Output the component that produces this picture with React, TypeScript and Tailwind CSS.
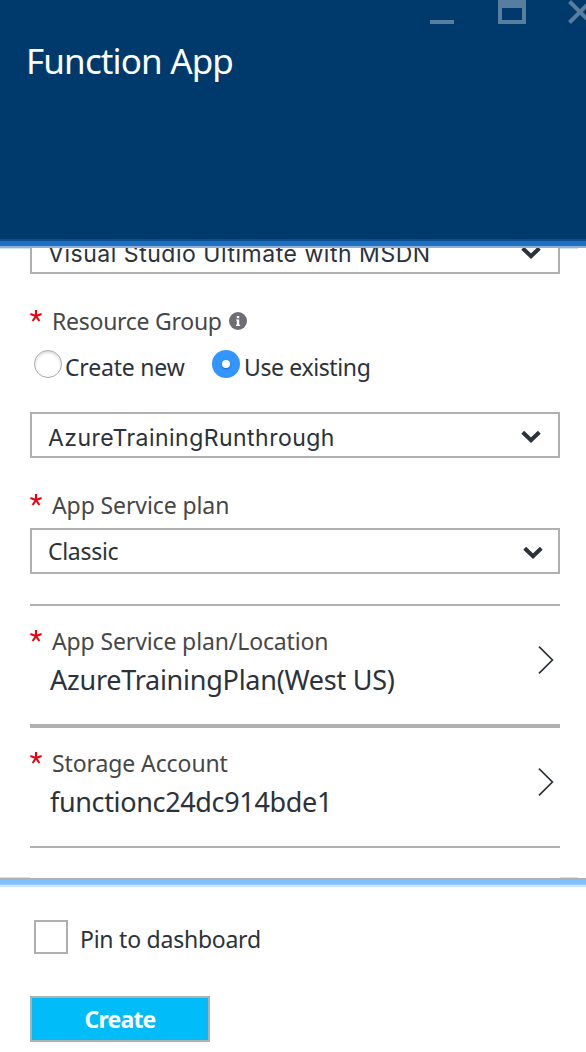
import type { ReactNode } from 'react';

function Required() {
  return (
    <svg className="mt-[5px] h-3 w-3 shrink-0" viewBox="0 0 12 12" fill="none" stroke="#f0000f" strokeWidth="2.1">
      <path d="M6 6V0M6 6L.4 4.1M6 6L11.6 4.1M6 6L2.6 11M6 6L9.4 11" />
    </svg>
  );
}

function Label({ children, className }: { children: ReactNode; className: string }) {
  return (
    <div className="flex h-8">
      <Required />
      <span className={`ml-2.5 text-[23px] leading-8 whitespace-nowrap text-[#474747] ${className}`}>{children}</span>
    </div>
  );
}

function Caret({ className }: { className: string }) {
  return (
    <svg className={`h-3.5 w-5 shrink-0 ${className}`} viewBox="0 0 20 14" fill="none" stroke="#2b323a" strokeWidth="4">
      <path d="M1.7 2.2L10 10.3L18.3 2.2" />
    </svg>
  );
}

function Chevron() {
  return (
    <svg className="mr-1.5 h-7 w-4 shrink-0" viewBox="0 0 16 28" fill="none" stroke="#2b323a" strokeWidth="1.7">
      <path d="M1 .6L14.4 14L1 27.4" />
    </svg>
  );
}

function EdgeGlow() {
  return (
    <div className="flex h-px shrink-0 justify-between pr-2">
      <div className="w-[30px] bg-[#cce2f6]" />
      <div className="w-[18px] bg-[#cce2f6]" />
    </div>
  );
}

export default function App() {
  return (
    <div className="flex h-[1052px] w-[586px] flex-col overflow-hidden bg-white font-['Noto_Sans','Open_Sans',sans-serif] text-[#2b323a]">
      <header className="h-[239px] shrink-0 bg-[#003a6c]">
        <div className="flex h-6 justify-end">
          <svg className="h-6 w-[156px]" viewBox="0 0 156 24" fill="#587e9f">
            <path d="M0 20h24v4H0zM68 0h28v24H68zM72 8v12h20V8z" fillRule="evenodd" />
            <path d="M139.5 1.5L160 22M139.5 22.5L160 2" stroke="#587e9f" strokeWidth="4" fill="none" />
          </svg>
        </div>
        <h1 className="mt-[13px] ml-[26px] text-[35px] leading-[48px] tracking-[-0.85px] whitespace-nowrap text-white">Function App</h1>
      </header>
      <div className="h-0.5 shrink-0 bg-[#0a508f]" />
      <div className="h-[5px] shrink-0 bg-[#1f70c4]" />
      <div className="h-0.5 shrink-0 bg-[#8fb0d3]" />
      <EdgeGlow />

      <main className="-mt-px flex h-[629px] shrink-0 flex-col pr-[26px] pl-[30px]">
        <div className="flex h-[26px] shrink-0 items-end justify-between overflow-hidden border-x-2 border-b-2 border-[#b0b0b0] bg-white pr-[17px] pl-4 font-['Inter',sans-serif]">
          <span className="mb-[2px] text-[23px] leading-8 tracking-[0.53px] whitespace-nowrap">Visual Studio Ultimate with MSDN</span>
          <Caret className="mb-[12px]" />
        </div>

        <div className="mt-[31px] flex items-start">
          <Label className="tracking-[-0.27px]">Resource Group</Label>
          <svg className="mt-[7px] ml-[7px] h-[18px] w-[18px]" viewBox="0 0 18 18">
            <circle cx="9" cy="9" r="9" fill="#6c6e74" />
            <path d="M7.8 4h2.4v2.2H7.8zM7 7.4h3.2v5.4h.9V14H7v-1.2h.8V8.6H7z" fill="#fff" />
          </svg>
        </div>

        <div className="mt-3.5 flex h-8 items-start text-[23px] leading-8">
          <label className="flex w-[178px] pl-1 whitespace-nowrap">
            <span className="mt-[-1px] mr-[3px] h-7 w-7 shrink-0 rounded-full border border-[#a8a8a8] bg-white shadow-[inset_0_2px_3px_#ddd]" />
            <span className="tracking-[-0.2px]">Create new</span>
          </label>
          <label className="flex pl-1 whitespace-nowrap">
            <span className="mt-[-1px] mr-[4px] flex h-7 w-7 shrink-0 items-center justify-center rounded-full bg-[#3395ff]">
              <span className="h-2 w-2 rounded-full bg-white shadow-[0_1px_2px_#1763b8]" />
            </span>
            <span className="tracking-[-0.38px]">Use existing</span>
          </label>
        </div>

        <div className="mt-[29px] flex h-[46px] shrink-0 justify-between border-2 border-[#b0b0b0] pr-[17px] pl-4 font-['Inter',sans-serif]">
          <span className="mt-2 text-[23px] leading-8 tracking-[0.47px]">AzureTrainingRunthrough</span>
          <Caret className="mt-4" />
        </div>

        <div className="mt-[31px]"><Label className="tracking-[-0.1px]">App Service plan</Label></div>
        <div className="mt-[7px] flex h-[46px] shrink-0 justify-between border-2 border-[#b0b0b0] pr-[15px] pl-4">
          <span className="mt-[5px] text-[23px] leading-8 tracking-[-0.3px]">Classic</span>
          <Caret className="mt-4" />
        </div>

        <section className="mt-[30px] flex h-[120px] shrink-0 items-start justify-between border-t-2 border-[#b0b0b0] pt-[19px]">
          <div>
            <Label className="tracking-[-0.13px]">App Service plan/Location</Label>
            <div className="mt-[5px] ml-5 text-[27px] leading-9 tracking-[-0.25px] whitespace-nowrap">AzureTrainingPlan(West US)</div>
          </div>
          <div className="mt-[21px]"><Chevron /></div>
        </section>
        <section className="flex h-[124px] shrink-0 items-start justify-between border-t-4 border-b-2 border-[#b0b0b0] pt-[19px]">
          <div>
            <Label className="tracking-[-0.1px]">Storage Account</Label>
            <div className="mt-[5px] ml-5 text-[27px] leading-9 tracking-[-0.35px] whitespace-nowrap">functionc24dc914bde1</div>
          </div>
          <div className="mt-[21px]"><Chevron /></div>
        </section>
      </main>

      <EdgeGlow />
      <div className="h-0.5 shrink-0 bg-[#b0b0b0]" />
      <div className="h-1 shrink-0 bg-[#80bfff]" />
      <div className="h-px shrink-0 bg-[#99cbff]" />
      <div className="h-0.5 shrink-0 bg-[#cce5ff]" />

      <footer className="flex flex-col px-[30px] pt-[33px]">
        <label className="flex pl-1">
          <span className="h-[34px] w-[34px] border-2 border-[#b0b0b0]" />
          <span className="mt-[3px] ml-3 h-[31px] text-[23px] leading-8 tracking-[-0.24px]">Pin to dashboard</span>
        </label>
        <button className="mt-[42px] h-[46px] w-[180px] border-2 border-[#b0b0b0] bg-[#00bcf8] text-[23px] leading-[42px] font-bold tracking-[-0.8px] text-white">Create</button>
      </footer>
    </div>
  );
}
